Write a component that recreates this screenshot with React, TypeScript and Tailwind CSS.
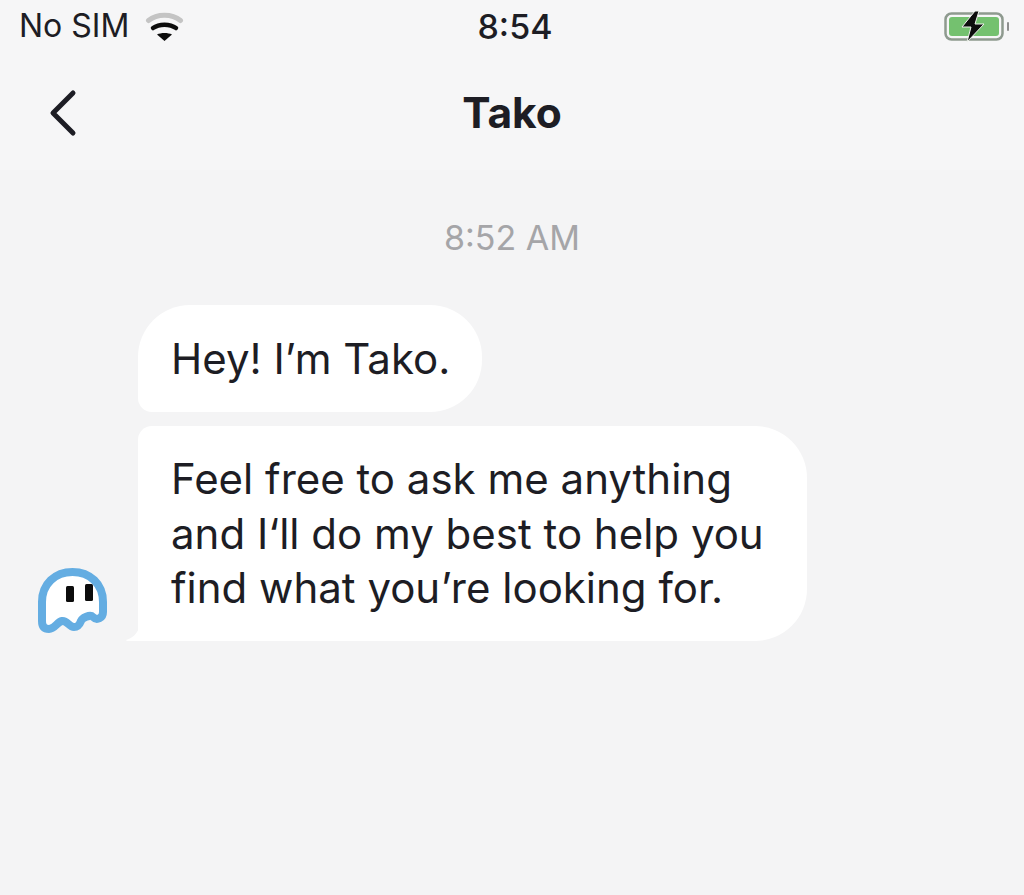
import { ChevronLeft } from 'lucide-react';

const font = { fontFamily: 'Inter, "Liberation Sans", sans-serif' };

function Wifi() {
  return (
    <svg width="40" height="30" viewBox="0 0 40 30" aria-hidden="true">
      <path d="M3.5 9.5C12 2.5 27 2.5 35.5 9.5" fill="none" stroke="#c4c4c4" strokeWidth="5" strokeLinecap="round" />
      <path d="M8 17C14 12.5 25 12.5 31 17" fill="none" stroke="#0c0c0c" strokeWidth="4.5" strokeLinecap="round" />
      <path d="M12 23.5C16 21.5 23 21.5 27 23.5L19.5 30Z" fill="#0c0c0c" />
    </svg>
  );
}

function Battery() {
  return (
    <svg width="68" height="36" viewBox="0 0 68 36" aria-hidden="true">
      <rect x="2.5" y="5.5" width="57" height="26" rx="6" fill="none" stroke="#8e9a8f" strokeWidth="2.5" />
      <rect x="6" y="9" width="50" height="19" rx="3" fill="#74c16f" />
      <rect x="64" y="14" width="2" height="9" rx="1" fill="#8e8e8e" />
      <path d="M32 3L19 19H28L24 34L41 16H32L36 3Z" fill="#0d0d0d" stroke="#eef3ec" strokeWidth="1" />
    </svg>
  );
}

function Ghost() {
  return (
    <svg width="72" height="72" viewBox="0 0 72 72" aria-hidden="true">
      <path
        d="M5 55V36C5 18 18 6 35.5 6C53 6 66 18 66 36V46C66 52 60 55 56 51C53 48 45 52 44 55C42 60 40 61 37 61C32 61 30 54 25 55C20 56 18 63 12 63C7 63 5 60 5 55Z"
        fill="#ffffff"
        stroke="#64ade2"
        strokeWidth="8"
        strokeLinejoin="round"
      />
      <rect x="29" y="20" width="8" height="16" rx="1.5" fill="#0c0c0c" />
      <rect x="48" y="18" width="8" height="17" rx="1.5" fill="#0c0c0c" />
    </svg>
  );
}

export default function App() {
  return (
    <div className="h-[895px] w-[1024px] overflow-hidden bg-[#f4f4f5] text-[#1d1d24]" style={font}>
      <div className="bg-[#f6f6f7]">
        <div className="grid h-[52px] grid-cols-3 items-center pl-[19px] pr-[13px]">
          <div className="flex items-center gap-[16px] text-[32px]">
            <span>No SIM</span>
            <Wifi />
          </div>
          <div className="text-center text-[34px] font-medium">8:54</div>
          <div className="flex justify-end">
            <Battery />
          </div>
        </div>
        <div className="relative flex h-[118px] items-start justify-center pt-[35px]">
          <ChevronLeft className="absolute left-[23px] top-[21px] h-[80px] w-[80px] text-[#1d1d24]" strokeWidth={1.5} />
          <h1 className="text-[42.5px] leading-[52px] font-bold">Tako</h1>
        </div>
      </div>

      <div className="pt-[48px] text-center text-[34px] leading-[40px] text-[#a5a5a8]">8:52 AM</div>

      <div className="mt-[47px] flex flex-col gap-[14px] pl-[37px]">
        <div className="pl-[101px]">
          <div className="w-[344px] rounded-[52px] rounded-bl-[14px] bg-white pt-[27px] pb-[26px] pl-[33px] text-[42px] leading-[54px]">
            Hey! I’m Tako.
          </div>
        </div>
        <div className="flex items-end">
          <div className="w-[72px] self-end pb-[3px]">
            <Ghost />
          </div>
          <div className="relative ml-[29px] w-[669px] rounded-[52px] rounded-tl-[14px] rounded-bl-none bg-white pt-[26px] pb-[25.5px] pl-[33px] text-[42px] leading-[54.5px]">
            <svg className="absolute bottom-0 left-[-12px]" width="14" height="20" viewBox="0 0 14 20" aria-hidden="true">
              <path d="M14 0C14 10 8 17 0 19Q0 20 2 20H14Z" fill="#ffffff" />
            </svg>
            Feel free to ask me anything
            <br />
            and I‘ll do my best to help you
            <br />
            find what you’re looking for.
          </div>
        </div>
      </div>
    </div>
  );
}
